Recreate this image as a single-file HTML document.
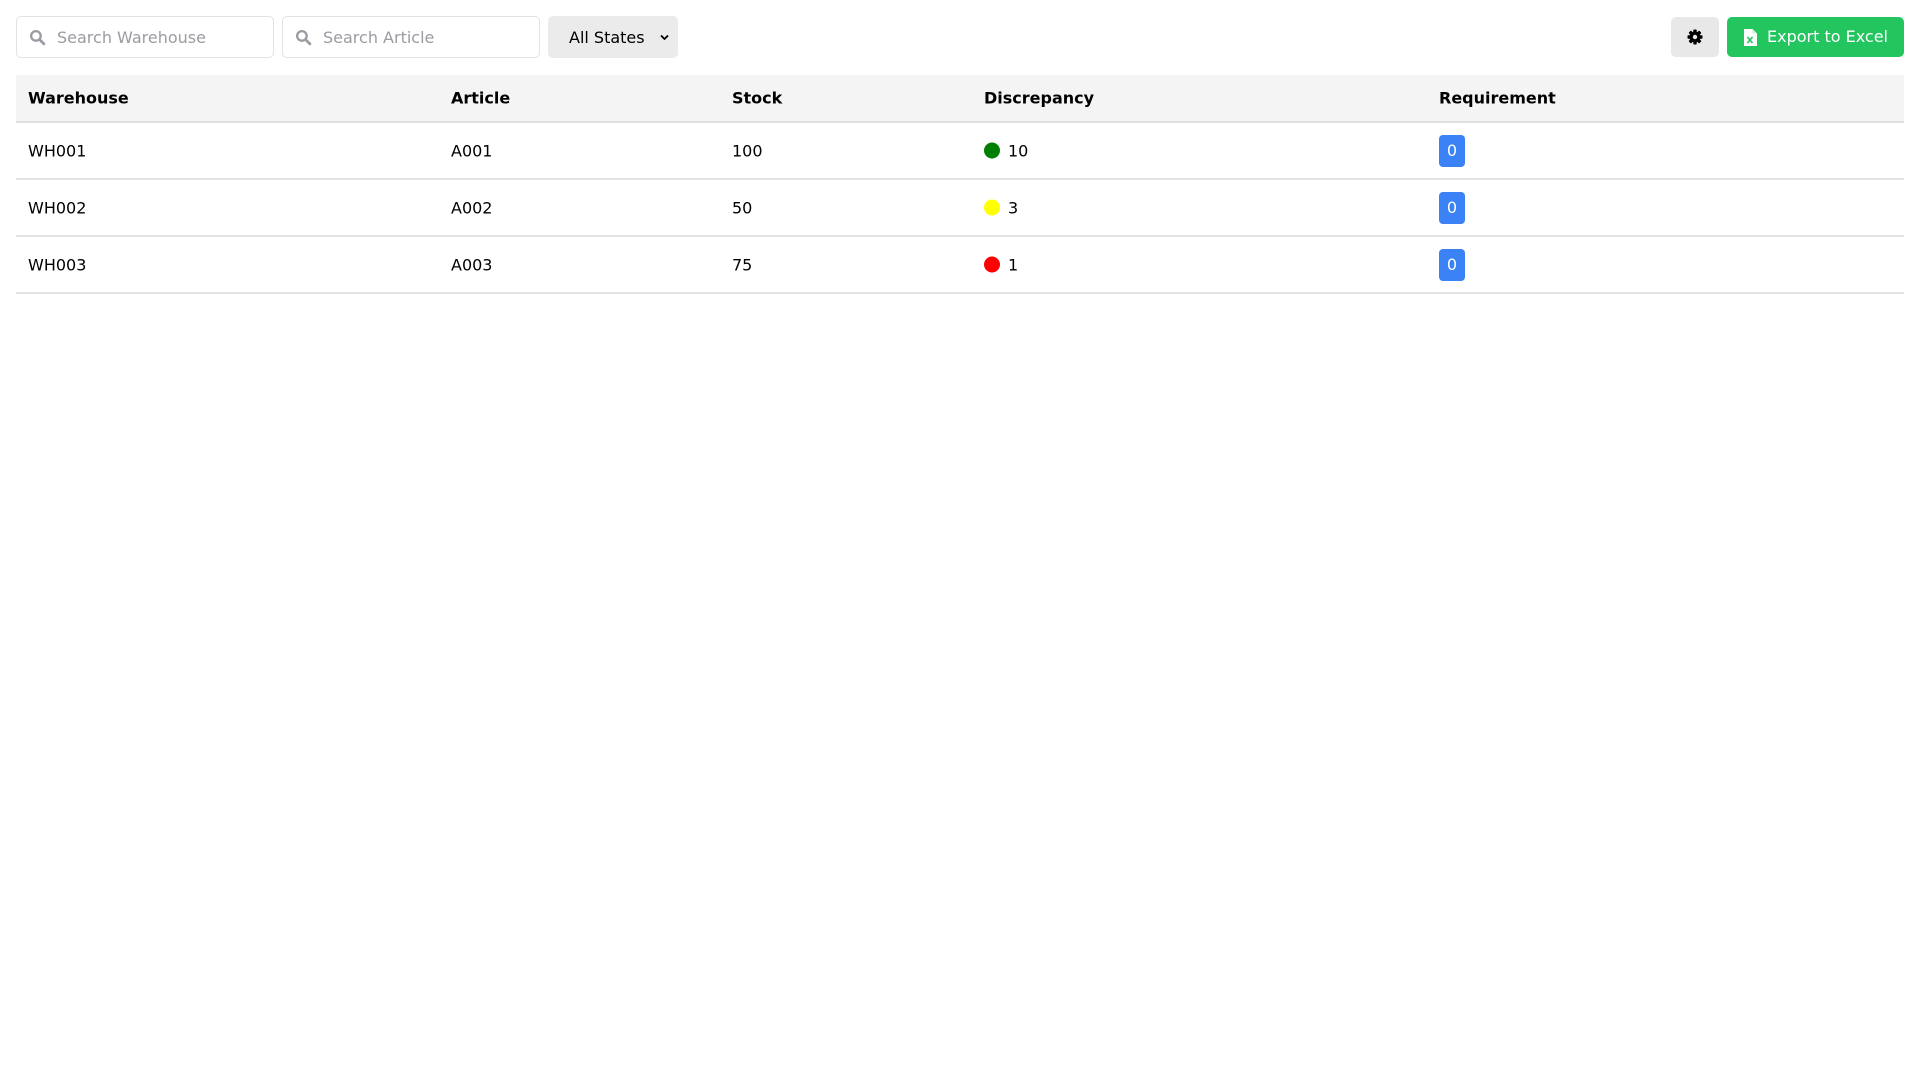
<!DOCTYPE html>
<html><head><meta charset="utf-8"><style>
*{box-sizing:border-box;margin:0;padding:0}
body{width:1920px;height:1080px;background:#fff;font-family:"DejaVu Sans","Liberation Sans",sans-serif;font-size:16px;color:#000;position:relative;overflow:hidden}
.inp{position:absolute;top:16px;height:42px;width:258px;border:1px solid #e2e2e2;border-radius:5px;background:#fff}
.inp svg{position:absolute;left:12px;top:12px}
.inp span{position:absolute;left:40px;top:11px;color:#9a9ca2}
.sel{position:absolute;left:548px;top:16px;width:130px;height:42px;background:#ebebeb;border-radius:5px}
.sel span{position:absolute;left:21px;top:12px}
.sel svg{position:absolute;left:112px;top:18px}
.gear{position:absolute;left:1671px;top:17px;width:48px;height:40px;background:#e8e8e8;border-radius:5px}
.gear svg{position:absolute;left:16px;top:12px}
.exp{position:absolute;left:1727px;top:17px;width:177px;height:40px;background:#22c55e;border-radius:5px;color:#fff}
.exp svg{position:absolute;left:17px;top:12px}
.exp span{position:absolute;left:40px;top:10px}
.thead{position:absolute;left:16px;top:75px;width:1888px;height:48px;background:#f4f4f4;border-bottom:2px solid #e0e0e0}
.row{position:absolute;left:16px;width:1888px;height:57px;border-bottom:2px solid #e3e3e3}
.c{position:absolute;top:50%;transform:translateY(-50%);white-space:nowrap}
.thead .c{font-weight:bold}
.dot{display:inline-block;width:16px;height:16px;border-radius:50%;vertical-align:-2px;margin-right:8px}
.badge{position:absolute;left:1423px;top:12px;width:26px;height:32px;background:#3b82f6;border-radius:4px;color:#fff;text-align:center;line-height:32px}
</style></head><body>
<div class="inp" style="left:16px"><svg width="17" height="17" viewBox="0 0 16 16"><circle cx="6.5" cy="6.5" r="4.5" fill="none" stroke="#9a9ca2" stroke-width="2.2"/><path d="M10 10l4 4" stroke="#9a9ca2" stroke-width="2.6" stroke-linecap="round"/></svg><span>Search Warehouse</span></div>
<div class="inp" style="left:282px"><svg width="17" height="17" viewBox="0 0 16 16"><circle cx="6.5" cy="6.5" r="4.5" fill="none" stroke="#9a9ca2" stroke-width="2.2"/><path d="M10 10l4 4" stroke="#9a9ca2" stroke-width="2.6" stroke-linecap="round"/></svg><span>Search Article</span></div>
<div class="sel"><span>All States</span><svg width="9" height="7" viewBox="0 0 9 7"><path d="M1 1.5l3.5 3.5 3.5-3.5" fill="none" stroke="#000" stroke-width="1.8"/></svg></div>
<div class="gear"><svg width="16" height="16" viewBox="0 0 16 16"><g fill="#000"><circle cx="8" cy="8" r="5.5"/><rect x="6.3" y="0.5" width="3.4" height="15" rx="0.8"/><rect x="6.3" y="0.5" width="3.4" height="15" rx="0.8" transform="rotate(45 8 8)"/><rect x="6.3" y="0.5" width="3.4" height="15" rx="0.8" transform="rotate(90 8 8)"/><rect x="6.3" y="0.5" width="3.4" height="15" rx="0.8" transform="rotate(135 8 8)"/></g><circle cx="8" cy="8" r="2.2" fill="#e8e8e8"/></svg></div>
<div class="exp"><svg width="13" height="17" viewBox="0 0 13 17"><path d="M0 0h8.5l4.5 4.5V17H0z" fill="#fff"/><path d="M8.5 0v4.5H13" fill="#c8f0d6"/><path d="M3.5 8l5 6M8.5 8l-5 6" stroke="#22c55e" stroke-width="1.6"/></svg><span>Export to Excel</span></div>
<div class="thead"><div class="c" style="left:12px">Warehouse</div><div class="c" style="left:435px">Article</div><div class="c" style="left:716px">Stock</div><div class="c" style="left:968px">Discrepancy</div><div class="c" style="left:1423px">Requirement</div></div>
<div class="row" style="top:123px"><div class="c" style="left:12px">WH001</div><div class="c" style="left:435px">A001</div><div class="c" style="left:716px">100</div><div class="c" style="left:968px"><span class="dot" style="background:#008000"></span>10</div><div class="badge">0</div></div>
<div class="row" style="top:180px"><div class="c" style="left:12px">WH002</div><div class="c" style="left:435px">A002</div><div class="c" style="left:716px">50</div><div class="c" style="left:968px"><span class="dot" style="background:#ffff00"></span>3</div><div class="badge">0</div></div>
<div class="row" style="top:237px"><div class="c" style="left:12px">WH003</div><div class="c" style="left:435px">A003</div><div class="c" style="left:716px">75</div><div class="c" style="left:968px"><span class="dot" style="background:#ff0000"></span>1</div><div class="badge">0</div></div>
</body></html>
